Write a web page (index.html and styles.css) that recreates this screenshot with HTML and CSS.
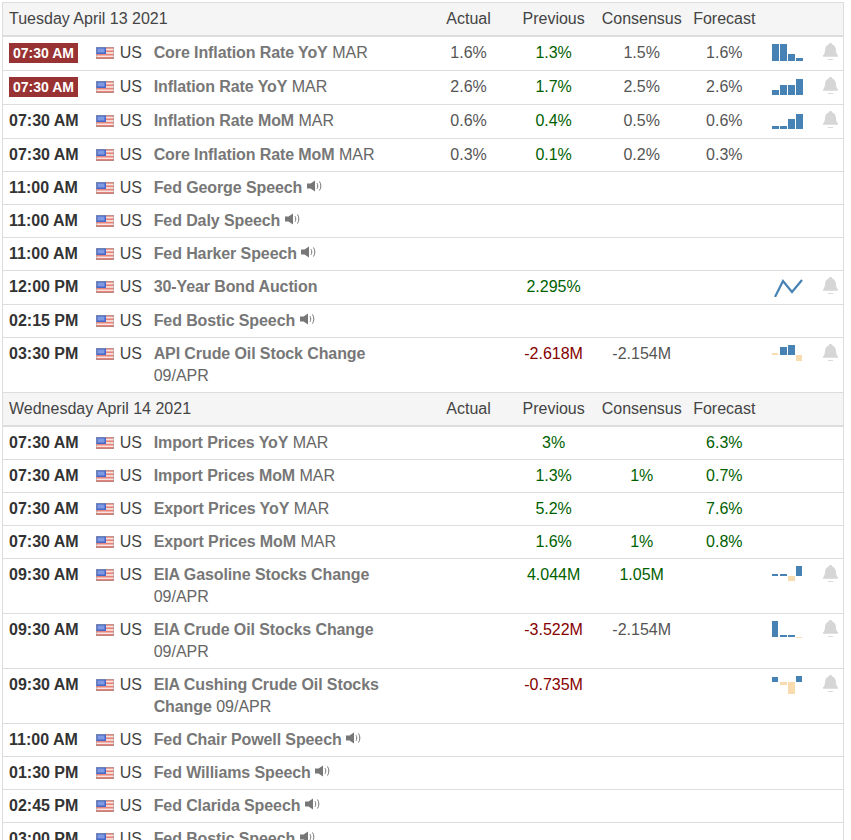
FILE: index.html
```html
<!DOCTYPE html>
<html lang="en">
<head>
<meta charset="utf-8">
<title>Economic Calendar</title>
<link rel="stylesheet" href="styles.css">
</head>
<body>
<svg class="defs" width="0" height="0" aria-hidden="true">
  <defs>
    <symbol id="flag" viewBox="0 0 18 12">
      <rect width="18" height="12" fill="#f6e4e0"/>
      <rect y="0" width="18" height="1.7" fill="#e8837a"/>
      <rect y="3.4" width="18" height="1.7" fill="#e8837a"/>
      <rect y="6.8" width="18" height="1.7" fill="#e8837a"/>
      <rect y="10.2" width="18" height="1.8" fill="#e06a60"/>
      <rect width="10" height="7" fill="#4468cc"/>
      <rect x="1.5" y="1.5" width="7" height="4" fill="#7f9ae0"/>
      <rect x=".25" y=".25" width="17.5" height="11.5" fill="none" stroke="#a09a9a" stroke-width=".5"/>
    </symbol>
    <symbol id="bell" viewBox="0 0 14 16">
      <path d="M7 0C8 0 8.700.6 8.800 1.500 11.300 2.300 12 4.500 12.200 7c.2 2.300.7 3.500 1.800 4.600V13H0v-1.400C1.100 10.500 1.600 9.300 1.800 7 2 4.500 2.700 2.300 5.200 1.500 5.300.6 6 0 7 0Z" fill="#d6d6d6"/>
      <rect x="4.500" y="15" width="5" height="1" fill="#dcdcdc"/>
    </symbol>
    <symbol id="speaker" viewBox="0 0 16 12">
      <path d="M0 3.500h3.500L8 .5v11L3.500 8.500H0Z" fill="#777"/>
      <path d="M10 3.200c1 1.700 1 3.900 0 5.600M12.500 1.500c1.800 2.700 1.800 6.300 0 9" fill="none" stroke="#777" stroke-width="1"/>
    </symbol>
  </defs>
</svg>
<main class="calendar">
<table class="events">
  <colgroup>
    <col class="c-time"><col class="c-flag"><col class="c-country"><col class="c-event">
    <col class="c-actual"><col class="c-prev"><col class="c-cons"><col class="c-fore">
    <col class="c-chart"><col class="c-bell">
  </colgroup>
  <tbody>
    <tr class="day"><th colspan="4" class="date">Tuesday April 13 2021</th><th>Actual</th><th>Previous</th><th>Consensus</th><th>Forecast</th><th></th><th></th></tr>
    <tr class="tall">
      <td class="time"><span class="badge">07:30 AM</span></td><td class="flag"><svg><use href="#flag"/></svg></td><td>US</td>
      <td class="event"><b>Core Inflation Rate YoY</b> MAR</td>
      <td class="val">1.6%</td><td class="val up">1.3%</td><td class="val">1.5%</td><td class="val">1.6%</td>
      <td class="chart"><svg viewBox="0 0 34 20"><rect x="0" y="1" width="7" height="17" class="b"/><rect x="8" y="1" width="7" height="17" class="b"/><rect x="16" y="11" width="7" height="7" class="b"/><rect x="24" y="15" width="7" height="3" class="b"/></svg></td>
      <td class="bell"><svg><use href="#bell"/></svg></td>
    </tr>
    <tr class="tall">
      <td class="time"><span class="badge">07:30 AM</span></td><td class="flag"><svg><use href="#flag"/></svg></td><td>US</td>
      <td class="event"><b>Inflation Rate YoY</b> MAR</td>
      <td class="val">2.6%</td><td class="val up">1.7%</td><td class="val">2.5%</td><td class="val">2.6%</td>
      <td class="chart"><svg viewBox="0 0 34 20"><rect x="0" y="13" width="7" height="5" class="b"/><rect x="8" y="8" width="7" height="10" class="b"/><rect x="16" y="8" width="7" height="10" class="b"/><rect x="24" y="2" width="7" height="16" class="b"/></svg></td>
      <td class="bell"><svg><use href="#bell"/></svg></td>
    </tr>
    <tr class="tall">
      <td class="time">07:30 AM</td><td class="flag"><svg><use href="#flag"/></svg></td><td>US</td>
      <td class="event"><b>Inflation Rate MoM</b> MAR</td>
      <td class="val">0.6%</td><td class="val up">0.4%</td><td class="val">0.5%</td><td class="val">0.6%</td>
      <td class="chart"><svg viewBox="0 0 34 20"><rect x="0" y="15" width="7" height="3" class="b"/><rect x="8" y="15" width="7" height="3" class="b"/><rect x="16" y="8" width="7" height="10" class="b"/><rect x="24" y="3" width="7" height="15" class="b"/></svg></td>
      <td class="bell"><svg><use href="#bell"/></svg></td>
    </tr>
    <tr>
      <td class="time">07:30 AM</td><td class="flag"><svg><use href="#flag"/></svg></td><td>US</td>
      <td class="event"><b>Core Inflation Rate MoM</b> MAR</td>
      <td class="val">0.3%</td><td class="val up">0.1%</td><td class="val">0.2%</td><td class="val">0.3%</td><td></td><td></td>
    </tr>
    <tr>
      <td class="time">11:00 AM</td><td class="flag"><svg><use href="#flag"/></svg></td><td>US</td>
      <td class="event"><b>Fed George Speech</b> <svg class="speaker"><use href="#speaker"/></svg></td>
      <td></td><td></td><td></td><td></td><td></td><td></td>
    </tr>
    <tr>
      <td class="time">11:00 AM</td><td class="flag"><svg><use href="#flag"/></svg></td><td>US</td>
      <td class="event"><b>Fed Daly Speech</b> <svg class="speaker"><use href="#speaker"/></svg></td>
      <td></td><td></td><td></td><td></td><td></td><td></td>
    </tr>
    <tr>
      <td class="time">11:00 AM</td><td class="flag"><svg><use href="#flag"/></svg></td><td>US</td>
      <td class="event"><b>Fed Harker Speech</b> <svg class="speaker"><use href="#speaker"/></svg></td>
      <td></td><td></td><td></td><td></td><td></td><td></td>
    </tr>
    <tr class="tall">
      <td class="time">12:00 PM</td><td class="flag"><svg><use href="#flag"/></svg></td><td>US</td>
      <td class="event"><b>30-Year Bond Auction</b></td>
      <td></td><td class="val up">2.295%</td><td></td><td></td>
      <td class="chart"><svg viewBox="0 0 34 20"><polyline points="3,20 11,4 20,15 30,3" fill="none" stroke="#4682b4" stroke-width="2.200"/></svg></td>
      <td class="bell"><svg><use href="#bell"/></svg></td>
    </tr>
    <tr>
      <td class="time">02:15 PM</td><td class="flag"><svg><use href="#flag"/></svg></td><td>US</td>
      <td class="event"><b>Fed Bostic Speech</b> <svg class="speaker"><use href="#speaker"/></svg></td>
      <td></td><td></td><td></td><td></td><td></td><td></td>
    </tr>
    <tr>
      <td class="time">03:30 PM</td><td class="flag"><svg><use href="#flag"/></svg></td><td>US</td>
      <td class="event"><b>API Crude Oil Stock Change</b> 09/APR</td>
      <td></td><td class="val down">-2.618M</td><td class="val">-2.154M</td><td></td>
      <td class="chart"><svg viewBox="0 0 34 20"><rect x="0" y="9" width="6" height="2" class="n"/><rect x="8" y="3" width="7" height="8" class="b"/><rect x="16" y="1" width="7" height="10" class="b"/><rect x="24" y="11" width="6" height="6" class="n"/></svg></td>
      <td class="bell"><svg><use href="#bell"/></svg></td>
    </tr>
    <tr class="day"><th colspan="4" class="date">Wednesday April 14 2021</th><th>Actual</th><th>Previous</th><th>Consensus</th><th>Forecast</th><th></th><th></th></tr>
    <tr>
      <td class="time">07:30 AM</td><td class="flag"><svg><use href="#flag"/></svg></td><td>US</td>
      <td class="event"><b>Import Prices YoY</b> MAR</td>
      <td></td><td class="val up">3%</td><td></td><td class="val up">6.3%</td><td></td><td></td>
    </tr>
    <tr>
      <td class="time">07:30 AM</td><td class="flag"><svg><use href="#flag"/></svg></td><td>US</td>
      <td class="event"><b>Import Prices MoM</b> MAR</td>
      <td></td><td class="val up">1.3%</td><td class="val up">1%</td><td class="val up">0.7%</td><td></td><td></td>
    </tr>
    <tr>
      <td class="time">07:30 AM</td><td class="flag"><svg><use href="#flag"/></svg></td><td>US</td>
      <td class="event"><b>Export Prices YoY</b> MAR</td>
      <td></td><td class="val up">5.2%</td><td></td><td class="val up">7.6%</td><td></td><td></td>
    </tr>
    <tr>
      <td class="time">07:30 AM</td><td class="flag"><svg><use href="#flag"/></svg></td><td>US</td>
      <td class="event"><b>Export Prices MoM</b> MAR</td>
      <td></td><td class="val up">1.6%</td><td class="val up">1%</td><td class="val up">0.8%</td><td></td><td></td>
    </tr>
    <tr>
      <td class="time">09:30 AM</td><td class="flag"><svg><use href="#flag"/></svg></td><td>US</td>
      <td class="event"><b>EIA Gasoline Stocks Change</b> 09/APR</td>
      <td></td><td class="val up">4.044M</td><td class="val up">1.05M</td><td></td>
      <td class="chart"><svg viewBox="0 0 34 20"><rect x="0" y="9" width="6" height="2" class="b"/><rect x="8" y="9" width="7" height="2" class="b"/><rect x="16" y="11" width="7" height="5" class="n"/><rect x="24" y="1" width="6" height="10" class="b"/></svg></td>
      <td class="bell"><svg><use href="#bell"/></svg></td>
    </tr>
    <tr>
      <td class="time">09:30 AM</td><td class="flag"><svg><use href="#flag"/></svg></td><td>US</td>
      <td class="event"><b>EIA Crude Oil Stocks Change</b> 09/APR</td>
      <td></td><td class="val down">-3.522M</td><td class="val">-2.154M</td><td></td>
      <td class="chart"><svg viewBox="0 0 34 20"><rect x="0" y="1" width="6" height="16" class="b"/><rect x="8" y="15" width="7" height="2" class="b"/><rect x="16" y="15" width="7" height="2" class="b"/><rect x="24" y="17" width="6" height="1" class="n"/></svg></td>
      <td class="bell"><svg><use href="#bell"/></svg></td>
    </tr>
    <tr>
      <td class="time">09:30 AM</td><td class="flag"><svg><use href="#flag"/></svg></td><td>US</td>
      <td class="event"><b>EIA Cushing Crude Oil Stocks Change</b> 09/APR</td>
      <td></td><td class="val down">-0.735M</td><td></td><td></td>
      <td class="chart"><svg viewBox="0 0 34 20"><rect x="0" y="2" width="6" height="5" class="b"/><rect x="8" y="7" width="7" height="3" class="n"/><rect x="16" y="7" width="7" height="12" class="n"/><rect x="24" y="1" width="6" height="6" class="b"/></svg></td>
      <td class="bell"><svg><use href="#bell"/></svg></td>
    </tr>
    <tr>
      <td class="time">11:00 AM</td><td class="flag"><svg><use href="#flag"/></svg></td><td>US</td>
      <td class="event"><b>Fed Chair Powell Speech</b> <svg class="speaker"><use href="#speaker"/></svg></td>
      <td></td><td></td><td></td><td></td><td></td><td></td>
    </tr>
    <tr>
      <td class="time">01:30 PM</td><td class="flag"><svg><use href="#flag"/></svg></td><td>US</td>
      <td class="event"><b>Fed Williams Speech</b> <svg class="speaker"><use href="#speaker"/></svg></td>
      <td></td><td></td><td></td><td></td><td></td><td></td>
    </tr>
    <tr>
      <td class="time">02:45 PM</td><td class="flag"><svg><use href="#flag"/></svg></td><td>US</td>
      <td class="event"><b>Fed Clarida Speech</b> <svg class="speaker"><use href="#speaker"/></svg></td>
      <td></td><td></td><td></td><td></td><td></td><td></td>
    </tr>
    <tr>
      <td class="time">03:00 PM</td><td class="flag"><svg><use href="#flag"/></svg></td><td>US</td>
      <td class="event"><b>Fed Bostic Speech</b> <svg class="speaker"><use href="#speaker"/></svg></td>
      <td></td><td></td><td></td><td></td><td></td><td></td>
    </tr>
  </tbody>
</table>
</main>
</body>
</html>
```
FILE: styles.css
```css
html, body {
  margin: 0;
  height: 840px;
  overflow: hidden;
  background: #fff;
}
body {
  padding: 2px 0 0 2px;
  box-sizing: border-box;
  font: 16px/22px "Liberation Sans", Arial, sans-serif;
  color: #444;
}
.defs { position: absolute; }
.calendar { width: 842px; }
.events {
  width: 100%;
  table-layout: fixed;
  border-collapse: collapse;
  border: 1px solid #ddd;
  border-width: 1px 1px 0;
}
.c-time { width: 93px; }
.c-flag { width: 24px; }
.c-country { width: 34px; }
.c-event { width: 275px; }
.c-actual { width: 79px; }
.c-prev { width: 91px; }
.c-cons { width: 85px; }
.c-fore { width: 80px; }
.c-chart { width: 51px; }
.c-bell { width: 28px; }
th, td {
  padding: 5px 0;
  text-align: left;
  vertical-align: top;
  font-weight: 400;
  border-bottom: 1px solid #ddd;
}
.day th {
  padding: 5px 0 5px;
  height: 22px;
  background: #f5f5f5;
  border-bottom: 2px solid #ddd;
  text-align: center;
  color: #444;
}
.day th.date { text-align: left; padding-left: 6px; }
.tall td { height: 23px; }
.time { padding-left: 6px; font-weight: 700; color: #333; white-space: nowrap; }
.badge {
  display: inline-block;
  width: 69px;
  height: 20px;
  margin-top: 1px;
  font-size: 14px;
  line-height: 20px;
  text-align: center;
  color: #fff;
  background: #993333;
}
.flag svg { display: block; width: 18px; height: 12px; margin-top: 5px; }
.event { color: #666; padding-right: 20px; }
.event b { color: #777; letter-spacing: -0.1px; }
.speaker { width: 16px; height: 12px; vertical-align: 1px; }
.val { text-align: center; color: #555; }
.up { color: #005f00; }
.down { color: #850000; }
.chart svg { display: block; width: 34px; height: 20px; margin: 1px 0 0 8px; }
.b { fill: #4682b4; }
.n { fill: #f8dcb0; }
.bell svg { display: block; width: 15px; height: 17px; margin: 1px 0 0 8px; }
```
